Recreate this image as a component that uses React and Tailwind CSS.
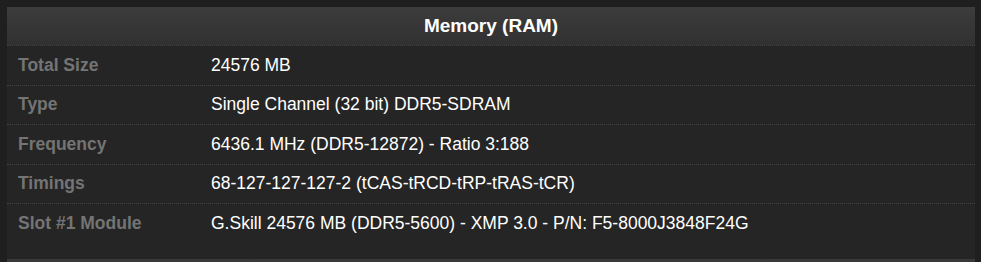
export default function App() {
  const rows = [
    ["Total Size", "24576 MB"],
    ["Type", "Single Channel (32 bit) DDR5-SDRAM"],
    ["Frequency", "6436.1 MHz (DDR5-12872) - Ratio 3:188"],
    ["Timings", "68-127-127-127-2 (tCAS-tRCD-tRP-tRAS-tCR)"],
    ["Slot #1 Module", "G.Skill 24576 MB (DDR5-5600) - XMP 3.0 - P/N: F5-8000J3848F24G"],
  ];

  return (
    <div className="h-[262px] w-[981px] overflow-hidden bg-[#1f1f1f] pl-[7px] pr-[6px] pt-[7px] font-['Liberation_Sans',Arial,sans-serif]">
      {/* Memory panel */}
      <section className="bg-[#252525] pb-[16.5px]">
        <div className="flex h-[38px] items-center justify-center bg-gradient-to-b from-[#3c3c3c] to-[#313131] text-[19px] font-bold text-white">
          Memory (RAM)
        </div>
        {rows.map(([label, value]) => (
          <div
            key={label}
            className="flex h-[39.5px] items-center border-t border-dotted border-[#444] pb-[1px] text-[17.5px]"
          >
            <div className="w-[204px] shrink-0 pl-[11px] font-bold text-[#747474]">
              {label}
            </div>
            <div className="text-white">{value}</div>
          </div>
        ))}
      </section>
      {/* top edge of next panel */}
      <div className="h-[10px] bg-gradient-to-b from-[#3a3a3a] to-[#333]" />
    </div>
  );
}
